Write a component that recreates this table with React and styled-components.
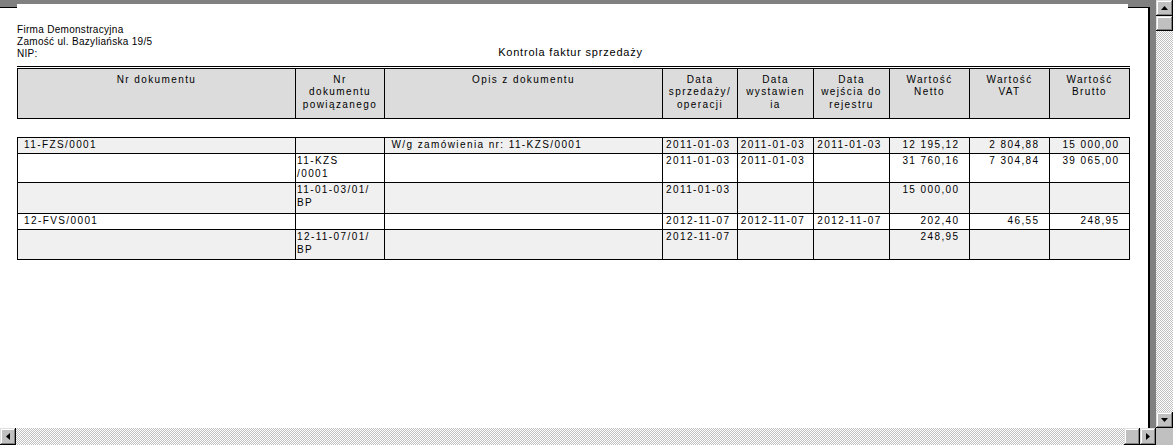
import React from 'react';
import styled, { createGlobalStyle } from 'styled-components';

const Global = createGlobalStyle`
  html, body { margin: 0; padding: 0; background: #808080; }
  body { font-family: "Liberation Sans", Arial, sans-serif; color: #000; }
  #root { width: 1173px; height: 445px; }
`;

const COLS = '278px 89px 278px 75px 76px 76px 80px 80px 80px';

const Window = styled.div`
  width: 1173px;
  height: 445px;
  display: flex;
  flex-direction: column;
  overflow: hidden;
  background: #c0c0c0;
`;

const MainRow = styled.div`
  display: flex;
  flex: 1;
  min-height: 0;
`;

const Viewport = styled.div`
  flex: 1;
  background: #808080;
  padding-top: 4px;
  overflow: hidden;
  box-sizing: border-box;
`;

const Sheet = styled.div`
  position: relative;
  margin-top: 3px;
  width: 1150px;
  height: 600px;
  box-sizing: border-box;
  background: #fff;
  border-top: 1px solid #000;
  border-right: 2px solid #000;
  padding: 16px 18px 0 17px;

  &::before {
    content: '';
    position: absolute;
    top: -4px;
    left: 17px;
    right: 20px;
    height: 4px;
    background: #fff;
  }
`;

const ReportHead = styled.div`
  display: grid;
  grid-template-columns: 1fr auto 1fr;
  align-items: end;
`;

const Company = styled.div`
  font-size: 10px;
  line-height: 12px;
  letter-spacing: 0.3px;
`;

const Title = styled.div`
  font-size: 11px;
  line-height: 13px;
  letter-spacing: 0.8px;
  margin-right: 6px;
  margin-bottom: 1px;
`;

const Rule = styled.div`
  height: 1px;
  background: #000;
  margin: 6px 0 1px;
`;

const Block = styled.div`
  width: 1113px;
  border-bottom: 1px solid #000;
  margin-top: ${p => p.$mt || 0}px;
`;

const Row = styled.div`
  display: grid;
  grid-template-columns: ${COLS};
  box-sizing: border-box;
  width: 1113px;
  height: ${p => p.$h}px;
  border-top: 1px solid #000;
  border-right: 1px solid #000;
  background: ${p => p.$bg};
`;

const HeadCell = styled.div`
  border-left: 1px solid #000;
  text-align: center;
  padding-top: 4.5px;
  font-size: 10px;
  line-height: 12.5px;
  letter-spacing: 1.4px;
  white-space: nowrap;
  overflow: hidden;
`;

const Cell = styled.div`
  border-left: 1px solid #000;
  padding: 1px ${p => p.$pr || 0}px 0 ${p => p.$pl || 0}px;
  text-align: ${p => p.$align};
  font-size: 10px;
  line-height: 12.5px;
  letter-spacing: 1.4px;
  white-space: nowrap;
  overflow: hidden;
`;

const VScroll = styled.div`
  width: 17px;
  flex: none;
  display: flex;
  flex-direction: column;
  background: #c0c0c0;
`;

const HScroll = styled.div`
  height: 17px;
  flex: none;
  display: flex;
`;

const Track = styled.div`
  flex: 1;
  background-color: #fff;
  background-image: repeating-conic-gradient(#c0c0c0 0 25%, #fff 0 50%);
  background-size: 2px 2px;
`;

const SBtn = styled.div`
  width: ${p => p.$w}px;
  height: ${p => p.$h}px;
  flex: none;
  box-sizing: border-box;
  background: #c0c0c0;
  box-shadow: inset -1px -1px #000, inset 1px 1px #dfdfdf,
    inset -2px -2px #808080, inset 2px 2px #fff;
  display: flex;
  align-items: center;
  justify-content: center;
`;

const Corner = styled.div`
  width: 17px;
  flex: none;
  background: #c0c0c0;
`;

const Arrow = ({ dir }) => {
  const pts = {
    up: '0,4 7,4 3.5,0',
    down: '0,0 7,0 3.5,4',
    left: '4,0 4,7 0,3.5',
    right: '0,0 0,7 4,3.5',
  }[dir];
  const vertical = dir === 'up' || dir === 'down';
  const w = vertical ? 7 : 4;
  const h = vertical ? 4 : 7;
  return (
    <svg width={w} height={h} viewBox={`0 0 ${w} ${h}`}>
      <polygon points={pts} fill="#000" />
    </svg>
  );
};

const headers = [
  ['Nr dokumentu'],
  ['Nr', 'dokumentu', 'powiązanego'],
  ['Opis z dokumentu'],
  ['Data', 'sprzedaży/', 'operacji'],
  ['Data', 'wystawien', 'ia'],
  ['Data', 'wejścia do', 'rejestru'],
  ['Wartość', 'Netto'],
  ['Wartość', 'VAT'],
  ['Wartość', 'Brutto'],
];

const colCfg = [
  { align: 'left', pl: 6 },
  { align: 'left', pl: 1 },
  { align: 'left', pl: 6.5 },
  { align: 'left', pl: 3 },
  { align: 'left', pl: 2.7 },
  { align: 'left', pl: 3.3 },
  { align: 'right', pr: 9.5 },
  { align: 'right', pr: 9.5 },
  { align: 'right', pr: 9.5 },
];

const SHADE = '#f0f0f0';

const rows = [
  { h: 16, bg: SHADE, cells: ['11-FZS/0001', '', 'W/g zamówienia nr: 11-KZS/0001', '2011-01-03', '2011-01-03', '2011-01-03', '12 195,12', '2 804,88', '15 000,00'] },
  { h: 29, bg: '#fff', cells: ['', ['11-KZS', '/0001'], '', '2011-01-03', '2011-01-03', '', '31 760,16', '7 304,84', '39 065,00'] },
  { h: 31, bg: SHADE, cells: ['', ['11-01-03/01/', 'BP'], '', '2011-01-03', '', '', '15 000,00', '', ''] },
  { h: 16, bg: '#fff', cells: ['12-FVS/0001', '', '', '2012-11-07', '2012-11-07', '2012-11-07', '202,40', '46,55', '248,95'] },
  { h: 30, bg: SHADE, cells: ['', ['12-11-07/01/', 'BP'], '', '2012-11-07', '', '', '248,95', '', ''] },
];

const Lines = ({ value }) => {
  const list = Array.isArray(value) ? value : [value];
  return list.map((l, i) => (
    <React.Fragment key={i}>
      {i > 0 && <br />}
      {l}
    </React.Fragment>
  ));
};

export default function App() {
  return (
    <>
      <Global />
      <Window>
        <MainRow>
          <Viewport>
            <Sheet>
              <ReportHead>
                <Company>
                  Firma Demonstracyjna
                  <br />
                  Zamość ul. Bazyliańska 19/5
                  <br />
                  NIP:
                </Company>
                <Title>Kontrola faktur sprzedaży</Title>
                <div />
              </ReportHead>
              <Rule />
              <Block>
                <Row $h={50} $bg="#dcdcdc">
                  {headers.map((h, i) => (
                    <HeadCell key={i}>
                      <Lines value={h} />
                    </HeadCell>
                  ))}
                </Row>
              </Block>
              <Block $mt={18}>
                {rows.map((r, ri) => (
                  <Row key={ri} $h={r.h} $bg={r.bg}>
                    {r.cells.map((c, ci) => (
                      <Cell key={ci} $align={colCfg[ci].align} $pl={colCfg[ci].pl} $pr={colCfg[ci].pr}>
                        <Lines value={c} />
                      </Cell>
                    ))}
                  </Row>
                ))}
              </Block>
            </Sheet>
          </Viewport>
          <VScroll>
            <SBtn $w={17} $h={16}><Arrow dir="up" /></SBtn>
            <SBtn $w={17} $h={15} />
            <Track />
            <SBtn $w={17} $h={16}><Arrow dir="down" /></SBtn>
          </VScroll>
        </MainRow>
        <HScroll>
          <SBtn $w={16} $h={17}><Arrow dir="left" /></SBtn>
          <Track />
          <SBtn $w={16} $h={17} />
          <SBtn $w={16} $h={17}><Arrow dir="right" /></SBtn>
          <Corner />
        </HScroll>
      </Window>
    </>
  );
}
